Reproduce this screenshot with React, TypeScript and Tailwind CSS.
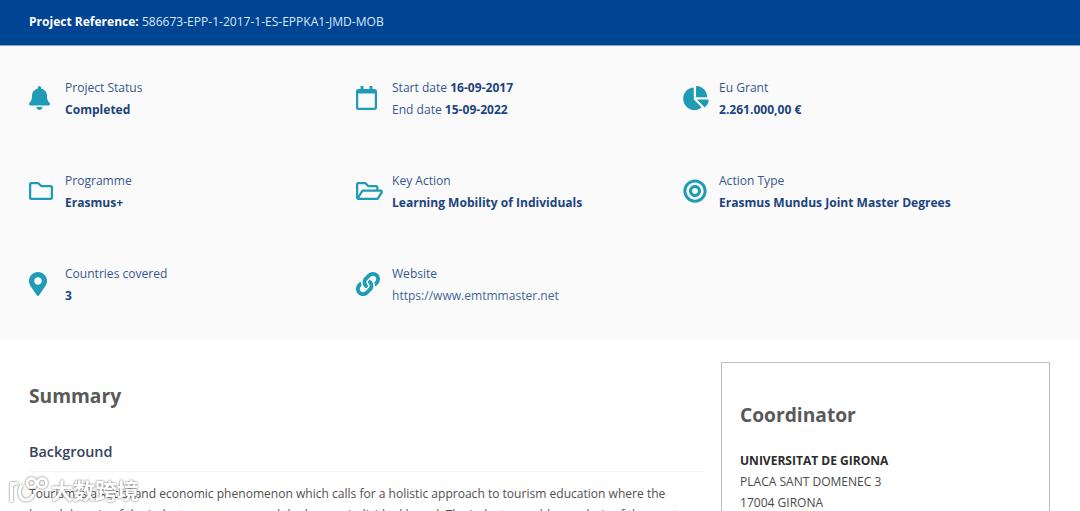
import type { ReactNode } from 'react';
import type { IconType } from 'react-icons';
import {
  FaBell,
  FaRegCalendar,
  FaChartPie,
  FaRegFolder,
  FaRegFolderOpen,
  FaBullseye,
  FaMapMarkerAlt,
  FaLink,
} from 'react-icons/fa';

interface Fact {
  icon: IconType;
  iconClass: string;
  first: ReactNode;
  second: ReactNode;
}

const facts: Fact[] = [
  { icon: FaBell, iconClass: 'w-[21px]', first: 'Project Status', second: <strong>Completed</strong> },
  {
    icon: FaRegCalendar,
    iconClass: 'w-[21px]',
    first: <>Start date <strong>16-09-2017</strong></>,
    second: <>End date <strong>15-09-2022</strong></>,
  },
  { icon: FaChartPie, iconClass: 'w-[26px]', first: 'Eu Grant', second: <strong>2.261.000,00 €</strong> },
  { icon: FaRegFolder, iconClass: 'w-6', first: 'Programme', second: <strong>Erasmus+</strong> },
  {
    icon: FaRegFolderOpen,
    iconClass: 'w-[27px]',
    first: 'Key Action',
    second: <strong>Learning Mobility of Individuals</strong>,
  },
  {
    icon: FaBullseye,
    iconClass: 'w-6',
    first: 'Action Type',
    second: <strong>Erasmus Mundus Joint Master Degrees</strong>,
  },
  { icon: FaMapMarkerAlt, iconClass: 'w-[18px]', first: 'Countries covered', second: <strong>3</strong> },
  {
    icon: FaLink,
    iconClass: 'w-6',
    first: 'Website',
    second: <a href="https://www.emtmmaster.net" className="text-[#3f679c]">https://www.emtmmaster.net</a>,
  },
];

function FactItem({ icon: Icon, iconClass, first, second }: Fact) {
  return (
    <div className="flex h-[93px] items-start">
      <div className="flex w-9 shrink-0 pt-[9px]">
        <Icon className={`h-6 shrink-0 text-[#1f9bb5] ${iconClass}`} />
      </div>
      <div className="whitespace-nowrap text-[12.06px] leading-[22px] text-[#36588f] [&_strong]:text-[#1c4480]">
        <p>{first}</p>
        <p>{second}</p>
      </div>
    </div>
  );
}

function Watermark() {
  return (
    <div className="absolute left-2 top-[475px] flex items-center text-white drop-shadow-[0_0_1px_#666]">
      <svg viewBox="0 0 40 28" className="h-7 w-10" fill="none" stroke="currentColor" strokeWidth="3">
        <path d="M3.5 7v20M3.5 12q1-4 6-4" />
        <path d="M14 10c-4 5-3 15 4 15 4 0 7-3 7-6" />
        <circle cx="23.5" cy="8" r="4.5" />
        <circle cx="34" cy="8" r="4.5" />
      </svg>
      <span className="ml-[3px] font-['Noto_Sans_CJK_SC',sans-serif] text-[22px] font-bold leading-7">大数跨境</span>
    </div>
  );
}

export default function App() {
  return (
    <div className="relative flex h-[511px] w-[1080px] flex-col overflow-hidden bg-white font-['Open_Sans',sans-serif]">
      <header className="h-[46px] shrink-0 border-b border-[#7fa5cf] bg-[#004494] pl-[29px] text-[12.04px] leading-[44px] text-white">
        <strong>Project Reference:</strong> <span className="text-[#dbe8f6]">586673-EPP-1-2017-1-ES-EPPKA1-JMD-MOB</span>
      </header>

      <section className="grid h-[294px] shrink-0 grid-cols-[327px_327px_1fr] content-start bg-[#fafafa] pl-[29px] pt-[31px]">
        {facts.map((fact, i) => (
          <FactItem key={i} {...fact} />
        ))}
      </section>

      <div className="flex items-start pl-[29px] pt-[22px]">
        <main className="w-[675px] shrink-0">
          <h2 className="pt-[19px] text-[19.2px] font-bold leading-[30px] text-[#595959]">Summary</h2>
          <h3 className="mt-[27px] border-b border-[#f5f5f5] pb-[5px] text-[14.4px] font-semibold leading-[28px] text-[#34445c]">
            Background
          </h3>
          <p className="mt-[11px] whitespace-nowrap text-[12.05px] leading-[21px] text-[#505050]">
            Tourism is a social and economic phenomenon which calls for a holistic approach to tourism education where the
            <br />
            broad domain of the industry, resources and the human individual based. The industry enables analysis of the most
          </p>
        </main>

        <aside className="ml-[17px] h-[200px] w-[329px] border border-[#bdbdbd] px-[18px] pt-[37px]">
          <h2 className="text-[19.2px] font-bold leading-[30px] text-[#595959]">Coordinator</h2>
          <p className="mt-[20px] whitespace-nowrap text-[12.04px] leading-[21px] text-[#4a4a4a]">
            <strong className="text-[#2b2b2b]">UNIVERSITAT DE GIRONA</strong>
            <br />
            PLACA SANT DOMENEC 3
            <br />
            17004 GIRONA
          </p>
        </aside>
      </div>

      <Watermark />
    </div>
  );
}
